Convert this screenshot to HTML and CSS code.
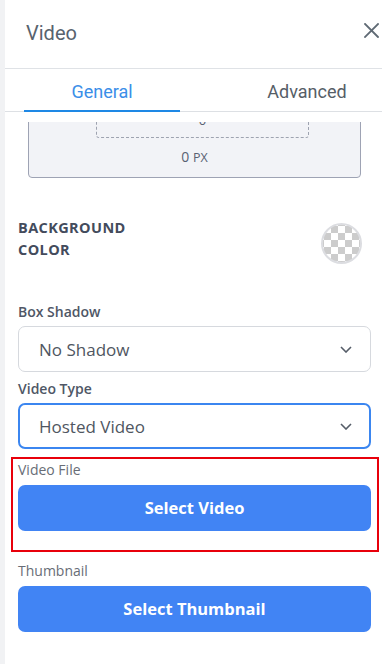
FILE: index.html
```html
<!DOCTYPE html>
<html lang="en">
<head>
<meta charset="utf-8">
<title>Video</title>
<link rel="stylesheet" href="styles.css">
</head>
<body>
<div class="panel">
  <div class="header">
    <div class="title">Video</div>
    <svg class="close" width="15" height="15" viewBox="0 0 15 15"><path d="M1 1 L14 14 M14 1 L1 14" stroke="#5f6a74" stroke-width="1.8" fill="none" stroke-linecap="square"/></svg>
  </div>
  <div class="tabs">
    <div class="tab active">General</div>
    <div class="tab other">Advanced</div>
  </div>
  <div class="content">
    <div class="spacing">
      <div class="spacing-inner">0</div>
      <div class="spacing-value"><span class="num">0</span> <span class="unit">PX</span></div>
    </div>

    <div class="color-row">
      <div class="color-label">BACKGROUND<br>COLOR</div>
      <div class="swatch"></div>
    </div>

    <div class="field f-shadow">
      <div class="label strong">Box Shadow</div>
      <div class="select">
        <span>No Shadow</span>
        <svg width="12" height="7" viewBox="0 0 12 7"><path d="M1 1 L6 6 L11 1" stroke="#555d68" stroke-width="1.6" fill="none"/></svg>
      </div>
    </div>

    <div class="field f-type">
      <div class="label strong">Video Type</div>
      <div class="select focus">
        <span>Hosted Video</span>
        <svg width="12" height="7" viewBox="0 0 12 7"><path d="M1 1 L6 6 L11 1" stroke="#555d68" stroke-width="1.6" fill="none"/></svg>
      </div>
    </div>

    <div class="field f-file highlight">
      <div class="label">Video File</div>
      <button class="btn">Select Video</button>
    </div>

    <div class="field f-thumb">
      <div class="label">Thumbnail</div>
      <button class="btn">Select Thumbnail</button>
    </div>
  </div>
</div>
</body>
</html>
```
FILE: styles.css
```css
* { box-sizing: border-box; }
html, body { margin: 0; padding: 0; }
body {
  background: #f1f2f4;
  font-family: "Open Sans", "Liberation Sans", sans-serif;
  height: 664px;
  overflow: hidden;
}
.panel {
  margin-left: 5px;
  background: #ffffff;
  height: 664px;
  display: flex;
  flex-direction: column;
}
.header {
  height: 69px;
  border-bottom: 1px solid #dfe2e6;
  display: flex;
  justify-content: space-between;
  align-items: flex-start;
  padding: 21px 3px 0 21px;
}
.title {
  font-family: Roboto, "Liberation Sans", sans-serif;
  font-size: 20px;
  line-height: 24px;
  color: #58636e;
}
.close { margin-top: 2px; display: block; }
.tabs {
  height: 43px;
  border-bottom: 1px solid #dde0e4;
  display: flex;
  justify-content: space-between;
  padding-left: 19px;
}
.tab {
  height: 43px;
  margin-bottom: -1px;
  padding-top: 12px;
  text-align: center;
  font-family: Roboto, "Liberation Sans", sans-serif;
  font-size: 18px;
  line-height: 22px;
}
.tab.active {
  width: 156px;
  color: #3a8ee8;
  border-bottom: 2px solid #1e88e5;
}
.tab.other {
  width: 150px;
  color: #565e67;
}
.content {
  margin-top: 10px;
  flex: 1;
  overflow: hidden;
  padding: 0 11px 0 13px;
}
.spacing {
  margin: -72px 10px 0;
  border: 1px solid #9ea3b4;
  border-radius: 4px;
  background: #f2f3f7;
  padding: 30px 0 10px;
}
.spacing-inner {
  margin: 0 51px 0 67px;
  border: 1px dashed #9ea3b0;
  border-radius: 3px;
  padding: 30px 0 9px;
  text-align: center;
  font-size: 13px;
  line-height: 16px;
  color: #596273;
}
.spacing-value {
  margin-top: 9px;
  text-align: center;
  font-size: 14px;
  line-height: 20px;
  height: 20px;
  color: #596273;
}
.spacing-value .num { font-size: 14px; }
.spacing-value .unit { font-size: 12.5px; }
.color-row {
  margin-top: 39px;
  display: flex;
  justify-content: space-between;
  align-items: flex-start;
  height: 44px;
}
.color-label {
  font-size: 14.5px;
  font-weight: 700;
  letter-spacing: 0.4px;
  line-height: 22px;
  color: #434b5c;
}
.swatch {
  width: 41px;
  height: 41px;
  margin-top: 6px;
  margin-right: 9px;
  flex-shrink: 0;
  border-radius: 50%;
  border: 2px solid #dcdde1;
  background-color: #ffffff;
  background-image: conic-gradient(#cccccc 25%, #ffffff 25% 50%, #cccccc 50% 75%, #ffffff 75%);
  background-size: 14px 14px;
  background-position: 1px 1px;
}
.field { display: block; }
.label {
  font-size: 14px;
  line-height: 20px;
  color: #686d76;
  margin-bottom: 4px;
}
.label.strong {
  font-weight: 600;
  color: #4f5766;
}
.f-shadow { margin-top: 41px; }
.f-type { margin-top: 7px; }
.f-file { margin-top: 8px; }
.f-thumb { margin-top: 9px; }
.f-file .label, .f-thumb .label { margin-bottom: 5px; }
.select {
  height: 46px;
  border: 1px solid #d6d9de;
  border-radius: 7px;
  display: flex;
  align-items: center;
  justify-content: space-between;
  padding: 1px 18px 0 20px;
  font-size: 17px;
  line-height: 24px;
  color: #4f5661;
}
.select svg { display: block; }
.select.focus {
  border: 2px solid #3b86f0;
  padding: 1px 17px 0 19px;
}
.highlight {
  border: 2px solid #e8000b;
  margin-left: -7px;
  margin-right: -8px;
  padding: 1px 6px 19px 5px;
}
.btn {
  display: block;
  width: 100%;
  height: 46px;
  border: none;
  border-radius: 7px;
  background: #4184f4;
  color: #ffffff;
  font-family: "Open Sans", "Liberation Sans", sans-serif;
  font-size: 16.5px;
  font-weight: 700;
  line-height: 22px;
  padding: 0;
}
```
